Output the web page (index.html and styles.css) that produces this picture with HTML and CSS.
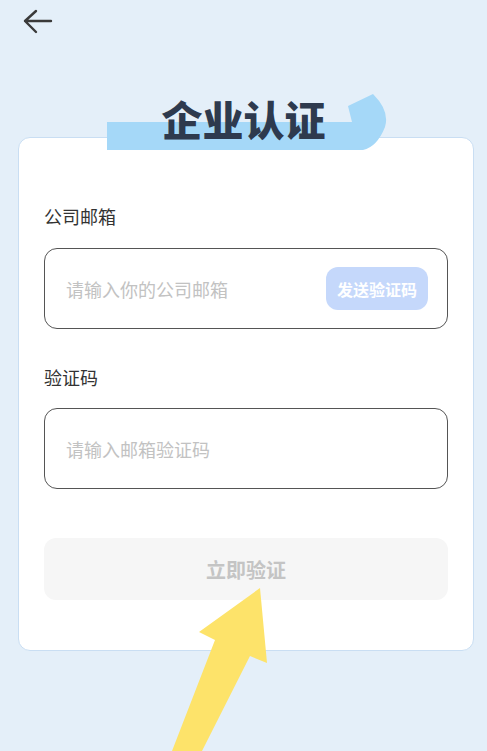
FILE: index.html
```html
<!DOCTYPE html>
<html lang="zh-CN">
<head>
    <meta charset="UTF-8">
    <meta name="viewport" content="width=device-width, initial-scale=1.0">
    <title>企业认证</title>
    <link rel="stylesheet" href="styles.css">
</head>
<body>
    <div class="page">
        <div class="topbar">
            <svg class="back" width="30" height="26" viewBox="0 0 30 26">
                <path d="M13 2 L2 12 L13 23 M2 12 H28" fill="none" stroke="#3a3a3a" stroke-width="2.4" stroke-linecap="round" stroke-linejoin="round"/>
            </svg>
        </div>

        <div class="hero">
            <svg class="highlight" width="290" height="62" viewBox="0 0 290 62">
                <path d="M0 29 L245 29 L241 13 L266 1 Q283 18 278 34 Q270 54 256 57 L0 57 Z" fill="#a5d8f8"/>
            </svg>
            <h1 class="title">企业认证</h1>
        </div>

        <div class="card">
            <label class="label" for="email">公司邮箱</label>
            <div class="field">
                <input type="text" id="email" placeholder="请输入你的公司邮箱">
                <button class="send-btn">发送验证码</button>
            </div>

            <label class="label label-code" for="code">验证码</label>
            <div class="field">
                <input type="text" id="code" placeholder="请输入邮箱验证码">
            </div>

            <button class="submit-btn">立即验证</button>
        </div>

        <svg class="pointer" width="487" height="751" viewBox="0 0 487 751">
            <path d="M260 588 L267 663 L250 656 L202 751 L172 751 L215 640 L199 632 Z" fill="#fde36a"/>
        </svg>
    </div>
</body>
</html>
```

FILE: styles.css
```css
* {
    box-sizing: border-box;
}
html, body {
    margin: 0;
    padding: 0;
}
body {
    font-family: "Noto Sans CJK SC", "Noto Sans", sans-serif;
    background-color: #e4eff9;
    color: #333;
}
.page {
    position: relative;
    width: 487px;
    height: 751px;
    overflow: hidden;
}
.topbar {
    height: 46px;
    padding: 9px 0 0 23px;
}
.back {
    display: block;
}
.hero {
    position: relative;
    z-index: 1;
    padding-top: 52px;
}
.highlight {
    position: absolute;
    left: 107px;
    top: 47px;
}
.title {
    position: relative;
    margin: 0;
    font-size: 41px;
    line-height: 40px;
    font-weight: 900;
    color: #2e3a4e;
    text-align: center;
}
.card {
    margin: -1px 13px 0 18px;
    padding: 66px 25px 50px;
    background: #fff;
    border: 1px solid #c9def3;
    border-radius: 12px;
    display: flex;
    flex-direction: column;
}
.label {
    display: block;
    font-size: 18px;
    line-height: 24px;
    color: #333;
}
.label-code {
    margin-top: 36px;
}
.field {
    margin-top: 20px;
    height: 81px;
    border: 1.5px solid #555;
    border-radius: 13px;
    display: flex;
    align-items: center;
    padding: 0 19px 0 21px;
}
.label-code + .field {
    margin-top: 19px;
}
.field input {
    flex: 1;
    min-width: 0;
    border: none;
    outline: none;
    background: transparent;
    font-family: inherit;
    font-size: 18px;
    color: #333;
    padding: 0;
}
.field input::placeholder {
    color: #c2c2c2;
}
.send-btn {
    width: 102px;
    height: 43px;
    border: none;
    border-radius: 12px;
    background-color: #c5d8fb;
    color: #fff;
    font-family: inherit;
    font-size: 16px;
    font-weight: 700;
    padding: 0;
}
.submit-btn {
    margin-top: 49px;
    height: 62px;
    border: none;
    border-radius: 12px;
    background-color: #f6f6f6;
    color: #c4c4c4;
    font-family: inherit;
    font-size: 20px;
    font-weight: 700;
}
.pointer {
    position: absolute;
    left: 0;
    top: 0;
    z-index: 2;
    pointer-events: none;
}
```
